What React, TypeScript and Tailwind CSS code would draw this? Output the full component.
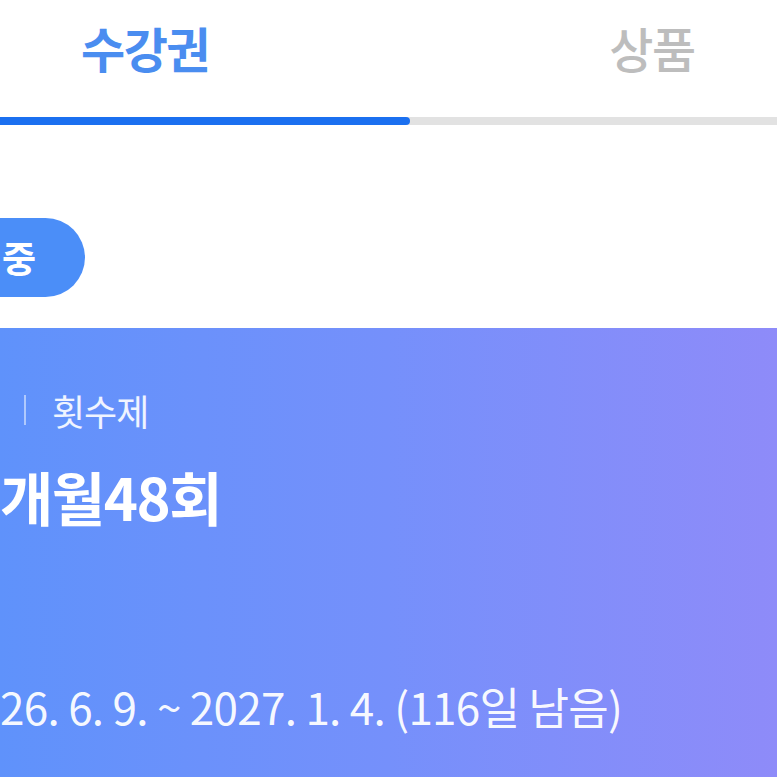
import React from "react";

export default function App() {
  const font = { fontFamily: '"Noto Sans CJK KR", "Noto Sans", sans-serif' };
  return (
    <div className="w-[777px] h-[777px] overflow-hidden bg-white flex flex-col" style={font}>
      {/* Tabs */}
      <div className="flex h-[117px] shrink-0">
        <div className="ml-[-120px] w-[530px] shrink-0 flex items-center justify-center pb-[24px]">
          <span className="text-[48px] font-bold text-[#4a8df0] tracking-[-1.5px] leading-none">수강권</span>
        </div>
        <div className="w-[484px] shrink-0 flex items-center justify-center pb-[24px]">
          <span className="text-[48px] font-medium text-[#bdbdbd] tracking-[-1.5px] leading-none">상품</span>
        </div>
      </div>
      <div className="flex h-[8px] shrink-0 bg-[#e2e2e2]">
        <div className="w-[410px] h-full bg-[#1b70f0] rounded-r-full" />
      </div>

      {/* Status pill */}
      <div className="flex h-[203px] shrink-0 items-start pt-[93px]">
        <div className="ml-[-130px] h-[79px] w-[215px] shrink-0 rounded-full bg-[#4b8ef8] flex items-center justify-end pr-[46px]">
          <span className="text-[37px] font-bold text-white tracking-[3px] leading-none whitespace-nowrap">사용중</span>
        </div>
      </div>

      {/* Card */}
      <div className="flex-1 bg-gradient-to-r from-[#5f92fb] via-[#7590fb] to-[#8e8bf9] flex flex-col text-white">
        <div className="flex items-center h-[36px] mt-[64px]">
          <span className="w-[2px] h-[30px] bg-white/50 ml-[24px]" />
          <span className="ml-[26px] text-[36px] leading-none text-white/90 tracking-[-1px]">횟수제</span>
        </div>
        <div className="mt-[38px] h-[60px] flex items-center">
          <span className="text-[58px] font-bold leading-none tracking-[-1.5px]">개월48회</span>
        </div>
        <div className="mt-[158px] flex items-center h-[44px]">
          <span className="text-[44px] leading-none text-white/95 tracking-[-0.7px] whitespace-nowrap">26. 6. 9. ~ 2027. 1. 4. (116일 남음)</span>
        </div>
      </div>
    </div>
  );
}
